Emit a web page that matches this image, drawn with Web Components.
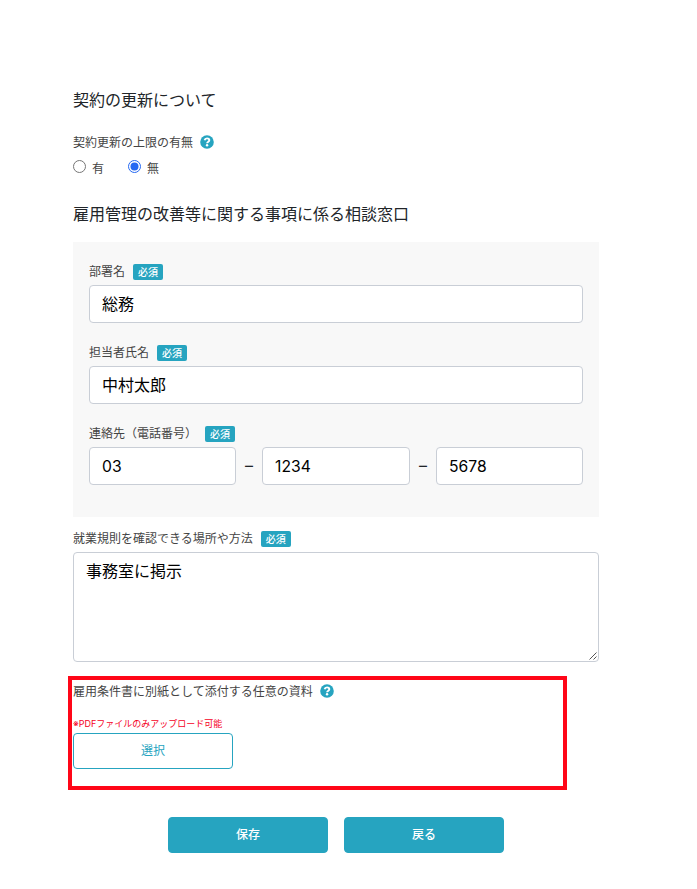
<!DOCTYPE html>
<html lang="ja">
<head>
<meta charset="utf-8">
<title>契約の更新について</title>
<style>
html,body{margin:0;background:#fff}
body{font-family:Inter,"Noto Sans CJK JP",sans-serif;color:#212529}
</style>
</head>
<body>
<contract-form></contract-form>
<script>
const define = (name, html) => customElements.define(name, class extends HTMLElement {
  constructor() {
    super();
    const t = document.createElement('template');
    t.innerHTML = html;
    this.attachShadow({mode: 'open'}).append(t.content.cloneNode(true));
  }
});

define('section-title', `<style>
:host{display:block;height:24px;font-size:16px;line-height:24px;color:#212529;white-space:nowrap}
</style><slot></slot>`);

define('required-badge', `<style>
:host{display:block;box-sizing:border-box;width:30px;height:16px;border-radius:2px;background:#26a4c0;color:#fff;font-size:10px;font-weight:500;line-height:16px;text-align:center}
</style>必須`);

define('help-icon', `<style>
:host{display:block;width:14px;height:14px;margin-left:-1px}
svg{display:block}
</style><svg width="14" height="14" viewBox="0 0 14 14"><circle cx="7" cy="7" r="6.8" fill="#26a4c0"/><path d="M4.600 5.300C4.900 4 5.800 3.400 7 3.400c1.400 0 2.300.8 2.300 1.900C9.300 6.700 7.100 6.700 7.100 8.300" fill="none" stroke="#fff" stroke-width="1.900"/><circle cx="7.050" cy="10.300" r="1.200" fill="#fff"/></svg>`);

define('field-label', `<style>
:host{display:flex;align-items:flex-start;height:18px;gap:8px;font-size:12px;line-height:18px;color:#444}
span{white-space:nowrap}
.text{padding-top:1px}
.extra{display:block;padding-top:2px}
</style><span class="text"><slot></slot></span><span class="extra"><slot name="extra"></slot></span>`);

define('text-field', `<style>
:host{display:block;box-sizing:border-box;height:38px;border:1px solid #c9ced6;border-radius:4px;background:#fff;padding:6px 12px;font-size:16px;line-height:24px;color:#000}
:host([area]){height:110px;position:relative}
:host([phone]){padding-top:7px;font-size:15.7px}
svg{display:none}
:host([area]) svg{display:block;position:absolute;right:1px;bottom:1px}
</style><div role="textbox"><slot></slot></div><svg width="8" height="8" viewBox="0 0 8 8"><path d="M.5 7.500 7.500.5M4.500 7.500l3-3" stroke="#555" stroke-width="1"/></svg>`);

define('radio-option', `<style>
:host{display:flex;gap:6px;height:18px;font-size:12px;line-height:18px;color:#444}
svg{display:block;margin-top:1px}
span{padding-top:1px}
.dot{display:none}
:host([checked]) .ring{stroke:#2468f2}
:host([checked]) .dot{display:block}
</style><svg width="13" height="13" viewBox="0 0 13 13"><circle class="ring" cx="6.500" cy="6.500" r="6" fill="#fff" stroke="#767676"/><circle class="dot" cx="6.500" cy="6.500" r="4" fill="#2468f2"/></svg><span><slot></slot></span>`);

define('action-button', `<style>
:host{display:block;box-sizing:border-box;width:160px;height:36px;border:1px solid #26a4c0;border-radius:4px;background:#26a4c0;color:#fff;font-size:12px;font-weight:500;line-height:33px;text-align:center}
:host([outline]){background:#fff;color:#26a4c0;font-weight:400}
</style><slot></slot>`);

define('phone-row', `<style>
:host{display:grid;grid-template-columns:147px 26px 148px 26px 147px;align-items:center;font-size:16px;text-align:center}
text-field{text-align:left}
span{padding-bottom:2px}
</style><text-field phone>03</text-field><span>–</span><text-field phone>1234</text-field><span>–</span><text-field phone>5678</text-field>`);

define('contact-panel', `<style>
:host{display:flex;flex-direction:column;box-sizing:border-box;height:275px;padding:20px 16px 0;background:#f8f8f8}
field-label{margin-bottom:5px}
text-field{margin-bottom:20px}
</style>
<field-label>部署名<required-badge slot="extra"></required-badge></field-label><text-field>総務</text-field>
<field-label>担当者氏名<required-badge slot="extra"></required-badge></field-label><text-field>中村太郎</text-field>
<field-label>連絡先（電話番号）<required-badge slot="extra"></required-badge></field-label><phone-row></phone-row>`);

define('attachment-section', `<style>
:host{display:block;position:relative;height:114px}
field-label{padding-top:6px}
.note{height:14px;margin:17px 0 2px;font-size:9px;line-height:14px;color:#f5001d;white-space:nowrap}
.highlight{position:absolute;box-sizing:border-box;left:-5px;top:0;width:499px;height:114px;border:4px solid #ff0618;pointer-events:none}
</style><field-label>雇用条件書に別紙として添付する任意の資料<help-icon slot="extra"></help-icon></field-label>
<div class="note">※PDFファイルのみアップロード可能</div>
<action-button outline>選択</action-button><div class="highlight"></div>`);

define('contract-form', `<style>
:host{display:flex;flex-direction:column;box-sizing:border-box;width:697px;height:889px;padding:88px 98px 0 73px}
.limit{margin-top:21px}
.radios{display:flex;gap:24px;margin-top:8px}
.contact{margin:25px 0 16px}
.rules{margin:12px 0 5px}
attachment-section{margin-top:14px}
.actions{display:flex;justify-content:center;gap:16px;margin-top:27px}
</style>
<section-title>契約の更新について</section-title>
<field-label class="limit">契約更新の上限の有無<help-icon slot="extra"></help-icon></field-label>
<div class="radios"><radio-option>有</radio-option><radio-option checked>無</radio-option></div>
<section-title class="contact">雇用管理の改善等に関する事項に係る相談窓口</section-title>
<contact-panel></contact-panel>
<field-label class="rules">就業規則を確認できる場所や方法<required-badge slot="extra"></required-badge></field-label>
<text-field area>事務室に掲示</text-field>
<attachment-section></attachment-section>
<div class="actions"><action-button>保存</action-button><action-button>戻る</action-button></div>`);
</script>
</body>
</html>
